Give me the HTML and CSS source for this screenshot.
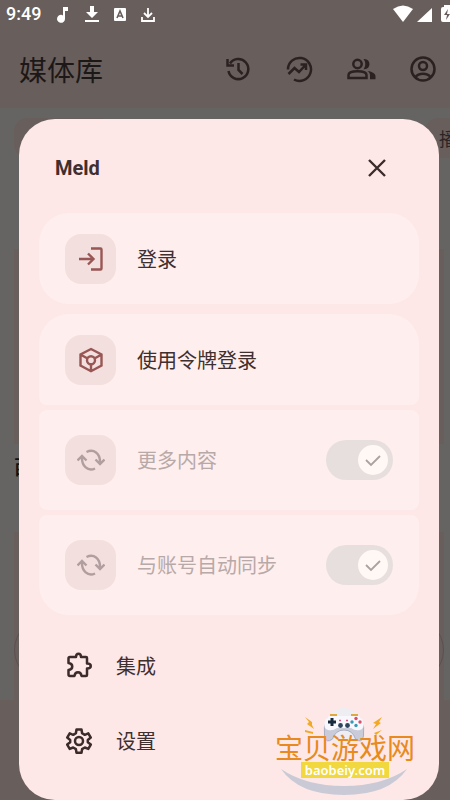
FILE: index.html
```html
<!DOCTYPE html>
<html lang="zh-CN">
<head>
<meta charset="utf-8">
<meta name="viewport" content="width=device-width, initial-scale=1">
<title>媒体库</title>
<link rel="stylesheet" href="styles.css">
</head>
<body>
<div class="screen">
  <header class="top">
    <div class="status">
      <span class="time">9:49</span>
      <div class="notices">
        <svg width="24" height="20" viewBox="0 0 24 20"><path fill="#fff" d="M11 3h5v4h-3v8a4 4 0 1 1-2-3.600z"/></svg>
        <svg width="24" height="20" viewBox="0 0 24 20"><path fill="#fff" d="M10 2h4v6h4l-6 6-6-6h4zM5 16h14v2H5z"/></svg>
        <svg width="24" height="20" viewBox="0 0 24 20"><rect x="6" y="4" width="12" height="13" rx="1" fill="#fff"/><path d="M9 14l3-7 3 7M10 12h4" fill="none" stroke="#685e5c" stroke-width="1.600"/></svg>
        <svg width="24" height="20" viewBox="0 0 24 20"><path d="M12 4v8M8 9l4 4 4-4M6 13v4h12v-4" fill="none" stroke="#fff" stroke-width="1.800"/></svg>
      </div>
      <div class="signals">
        <svg width="20" height="20" viewBox="0 0 20 20"><path fill="#fff" d="M0 5Q10-2 20 5L10 18z"/></svg>
        <svg width="16" height="20" viewBox="0 0 16 20"><path fill="#fff" d="M15 4v14H0z"/></svg>
        <svg width="9" height="20" viewBox="0 0 9 20"><path fill="#fff" d="M0 5q0-2 2-2h1V1h6v17H2q-2 0-2-2z"/><path fill="#685e5c" d="M7 5L3 11h3l-1 5 4-6H6z"/></svg>
      </div>
    </div>
    <div class="bar">
      <h1>媒体库</h1>
      <div class="actions">
        <button class="icon" aria-label="历史"><svg width="28" height="28" viewBox="0 0 28 28"><path d="M4.500 16A10 10 0 1 0 6 8.500" /><path d="M3.500 4v6.500H10M14.500 8v7l4 4"/></svg></button>
        <button class="icon" aria-label="统计"><svg width="28" height="28" viewBox="0 0 28 28"><path d="M3 14.500A11.500 11.500 0 1 1 9 24.500"/><path d="M3.500 19l6-6 4.500 4 7-7.500M15.500 9.500H21V15"/></svg></button>
        <button class="icon" aria-label="好友"><svg width="30" height="28" viewBox="0 0 30 28"><circle cx="11.500" cy="9" r="4.200"/><path d="M2.500 23v-3c0-5 18-5 18 0v3z"/><path class="solid" d="M17.500 4c8-.8 8 11 0 10.200 2.400-3 2.400-7.200 0-10.200zM21.500 16c5.500.8 8 3 8 5v3.300H24V20c0-1.500-1-3-2.500-4z"/></svg></button>
        <button class="icon" aria-label="账号"><svg width="28" height="28" viewBox="0 0 28 28"><circle cx="14" cy="14" r="11.500"/><circle cx="14" cy="11" r="4"/><path d="M6 22.500c4-5 12-5 16 0"/></svg></button>
      </div>
    </div>
  </header>
  <main class="library">
    <div class="chips"><span class="chip first"></span><span class="chip last">播</span></div>
    <div class="panel"></div>
    <h2>西</h2>
    <div class="panel lower"><div class="pill"></div></div>
  </main>
  <footer class="nav"></footer>

  <section class="dialog" role="dialog" aria-labelledby="dialog-title">
    <div class="dialog-head">
      <h2 id="dialog-title">Meld</h2>
      <button class="close" aria-label="关闭"><svg width="20" height="20" viewBox="0 0 20 20"><path d="M2 2l16 16M18 2L2 18" fill="none" stroke="#3b2b2b" stroke-width="2.400"/></svg></button>
    </div>
    <button class="card single">
      <span class="tile"><svg width="28" height="28" viewBox="0 0 28 28"><path d="M2 14h14M11 8.500l5.500 5.500-5.500 5.500M14 3.500h9.500a1 1 0 0 1 1 1v19a1 1 0 0 1-1 1H14"/></svg></span>
      <span>登录</span>
    </button>
    <div class="group">
      <button class="card head">
        <span class="tile"><svg width="28" height="28" viewBox="0 0 28 28"><path d="M14 3l10.500 5.500v11L14 25.200 3.500 19.500v-11zM3.500 8.500l7 4M24.500 8.500l-7 4M14 18v7"/><circle cx="14" cy="14.200" r="4"/></svg></span>
        <span>使用令牌登录</span>
      </button>
      <div class="card tall off">
        <span class="tile"><svg width="28" height="28" viewBox="0 0 28 28"><path d="M9.500 6C16.500 2.500 23.500 7 23 17M18.500 13.500l4.500 4.500 4.500-4.500M18 22.500C11 26 4.500 20 5 11M.5 14.500L5 10l4.500 4.500"/></svg></span>
        <label for="more">更多内容</label>
        <span class="switch"><input type="checkbox" id="more" checked disabled><svg width="30" height="30" viewBox="0 0 30 30"><circle cx="15" cy="15" r="15"/><path d="M8 15l5 5 9-9"/></svg></span>
      </div>
      <div class="card tall foot off">
        <span class="tile"><svg width="28" height="28" viewBox="0 0 28 28"><path d="M9.500 6C16.500 2.500 23.500 7 23 17M18.500 13.500l4.500 4.500 4.500-4.500M18 22.500C11 26 4.500 20 5 11M.5 14.500L5 10l4.500 4.500"/></svg></span>
        <label for="sync">与账号自动同步</label>
        <span class="switch"><input type="checkbox" id="sync" checked disabled><svg width="30" height="30" viewBox="0 0 30 30"><circle cx="15" cy="15" r="15"/><path d="M8 15l5 5 9-9"/></svg></span>
      </div>
    </div>
    <div class="links">
      <button class="row"><svg width="28" height="28" viewBox="0 0 28 28"><path d="M5 5h6c0-4.500 5-4.500 5 0h5a1 1 0 0 1 1 1v5.500c5 0 5 5 0 5V23a1 1 0 0 1-1 1h-4.500c-.5-5-6.500-5-7 0H5a1.500 1.500 0 0 1-1.500-1.500V18c5-.5 5-6.500 0-7V6.500A1.500 1.500 0 0 1 5 5z"/></svg><span>集成</span></button>
      <button class="row"><svg width="28" height="28" viewBox="0 0 28 28"><path d="M11.500 2.500h5l.6 3.700 2.700 1.600 3.500-1.400 2.500 4.200-3 2.400v2.300l3 2.300-2.500 4.300-3.500-1.400-2.700 1.600-.6 3.700h-5l-.6-3.700-2.700-1.600-3.500 1.400-2.500-4.300 3-2.300V13l-3-2.400 2.500-4.200 3.500 1.400 2.700-1.600z"/><circle cx="14" cy="14" r="4"/></svg><span>设置</span></button>
    </div>
  </section>

  <div class="brand">
    <svg class="brand-art" width="150" height="92" viewBox="0 0 150 92" aria-hidden="true">
      <circle cx="74" cy="18" r="18" fill="#eeeef2"/>
      <path d="M11 61Q29 87 74 87Q119 87 137 61Q112 78 74 78Q36 78 11 61z" fill="#c9cad5"/>
      <path d="M57 10Q53 20 54.500 28q1.500 8 8 3 3-9 11.500-9t11.500 9q6.500 5 8-3Q95 20 91 10z" fill="#c9cbd9" stroke="#aaaec1"/>
      <path d="M55 13q1-6 12-5h14q11-1 12 5 2 8-3 9-5 1-9-2H67q-4 3-9 2-5-1-3-9z" fill="#f8f8fc"/>
      <path d="M60 7h7M81 7h7" stroke="#e0a93f" stroke-width="2"/>
      <path d="M62 10v8M58 14h8" stroke="#18283d" stroke-width="3"/>
      <g fill="#dc4d68"><circle cx="86" cy="10.500" r="1.700"/><circle cx="90" cy="14" r="1.700"/></g><g fill="#3997b7"><circle cx="82" cy="14" r="1.700"/><circle cx="86" cy="17.500" r="1.700"/></g>
      <circle cx="70.500" cy="17.500" r="2.400" fill="#30445d"/><circle cx="77.500" cy="17.500" r="2.400" fill="#30445d"/>
      <path d="M69 12.500h2M76 12.500h2" stroke="#d95783" stroke-width="1.500"/>
      <g fill="#f2aa26"><path d="M35 9l7 5v3l2 4-7-5 2-2zM35 22l8 2v2l-8-2zM112 9l-9 6 3 1-3 5 8-6-2-1zM112 22l-8 3 2 2z"/></g>
    </svg>
    <span class="brand-name">宝贝游戏网</span>
    <span class="brand-url">baobeiy.com</span>
  </div>
</div>
</body>
</html>
```
FILE: styles.css
```css
* { box-sizing: border-box; }
body { margin: 0; font-family: "Noto Sans CJK SC", sans-serif; color: #3f2f2f; }
h1, h2 { margin: 0; font-weight: 400; }
button { border: 0; padding: 0; background: none; color: inherit; font: inherit; text-align: left; }
svg { display: block; flex: none; }

.screen { position: relative; display: flex; flex-direction: column; min-height: 100vh; background: #666462; overflow: hidden; }
.top { height: 108px; background: #685e5c; }
.status { display: flex; align-items: center; height: 28px; padding-left: 6px; color: #fff; }
.time { font-family: Roboto, sans-serif; font-size: 18px; font-weight: 500; line-height: 28px; }
.notices { display: flex; gap: 4px; margin-left: 11px; }
.signals { display: flex; gap: 4px; margin-left: auto; }
.signals svg:last-child { margin-left: 4px; }
.bar { display: flex; align-items: center; justify-content: space-between; height: 82px; padding: 0 13px 0 19px; }
.bar h1 { font-size: 28px; line-height: 40px; color: #1d1818; }
.actions { display: flex; gap: 33px; }
.icon svg { fill: none; stroke: #2c2121; stroke-width: 2.500; }
.icon .solid { fill: #2c2121; stroke: none; }

.library { flex: 1; display: flex; flex-direction: column; padding: 10px 6px 0 14px; }
.chips { display: flex; justify-content: space-between; height: 40px; margin-bottom: 91px; }
.chip { width: 100px; flex: none; border-radius: 14px; background: #685e5c; }
.chip.last { margin-right: -81px; padding-left: 14px; font-size: 18px; line-height: 40px; color: #2c2424; }
.panel { height: 195px; background: #685e5c; }
.library h2 { height: 88px; font-size: 20px; font-weight: 500; line-height: 46px; color: #111; }
.panel.lower { flex: 1; padding-top: 85px; }
.pill { height: 66px; border: 1px solid #5b5150; border-radius: 33px; }
.nav { height: 100px; background: #685e5c; }

.dialog { position: absolute; inset: 119px 11px 0 19px; padding: 0 20px; border-radius: 36px; background: #fde8e7; }
.dialog-head { display: flex; align-items: center; justify-content: space-between; height: 94px; padding: 4px 32px 0 16px; }
.dialog-head h2 { font-family: Roboto, sans-serif; font-size: 20px; font-weight: 700; line-height: 28px; }
.card { display: flex; align-items: center; gap: 21px; width: 100%; height: 91px; padding: 0 26px; border-radius: 8px; background: #feeeed; font-size: 20px; line-height: 28px; }
.card.single { margin-bottom: 10px; border-radius: 30px; }
.card.head { border-radius: 30px 30px 8px 8px; }
.card.tall { height: 100px; }
.card.foot { border-radius: 8px 8px 30px 30px; }
.group { display: grid; gap: 5px; }
.tile { display: grid; place-items: center; flex: none; width: 51px; height: 50px; border-radius: 16px; background: #f3dfde; }
.tile svg { fill: none; stroke: #985654; stroke-width: 2.400; }
.off { color: #b8a9a9; }
.off .tile svg { stroke: #b19e9e; }
.switch { position: relative; display: block; margin-left: auto; width: 67px; height: 40px; }
.switch input { appearance: none; display: block; width: 100%; height: 100%; margin: 0; border-radius: 20px; background: #e7dfdd; }
.switch svg { position: absolute; top: 5px; right: 5px; pointer-events: none; }
.switch circle { fill: #fff8f5; }
.switch path { fill: none; stroke: #aaa2a0; stroke-width: 1.800; }
.links { padding: 13px 26px 0; }
.row { display: flex; align-items: center; gap: 23px; width: 100%; height: 75px; font-size: 20px; line-height: 28px; }
.row svg { fill: none; stroke: #3b2b2b; stroke-width: 2.500; stroke-linejoin: round; }

.brand { position: absolute; right: 30px; bottom: 0; display: flex; flex-direction: column; align-items: center; width: 150px; height: 92px; padding-top: 25px; pointer-events: none; }
.brand-art { position: absolute; inset: 0; }
.brand-name { position: relative; font-size: 28px; line-height: 28px; color: #e88a20; }
.brand-url { position: relative; margin-top: 1px; padding: 0 4px; background: #f0d83e; font: 600 13px/16px "Noto Sans", sans-serif; color: #fff; }
```
